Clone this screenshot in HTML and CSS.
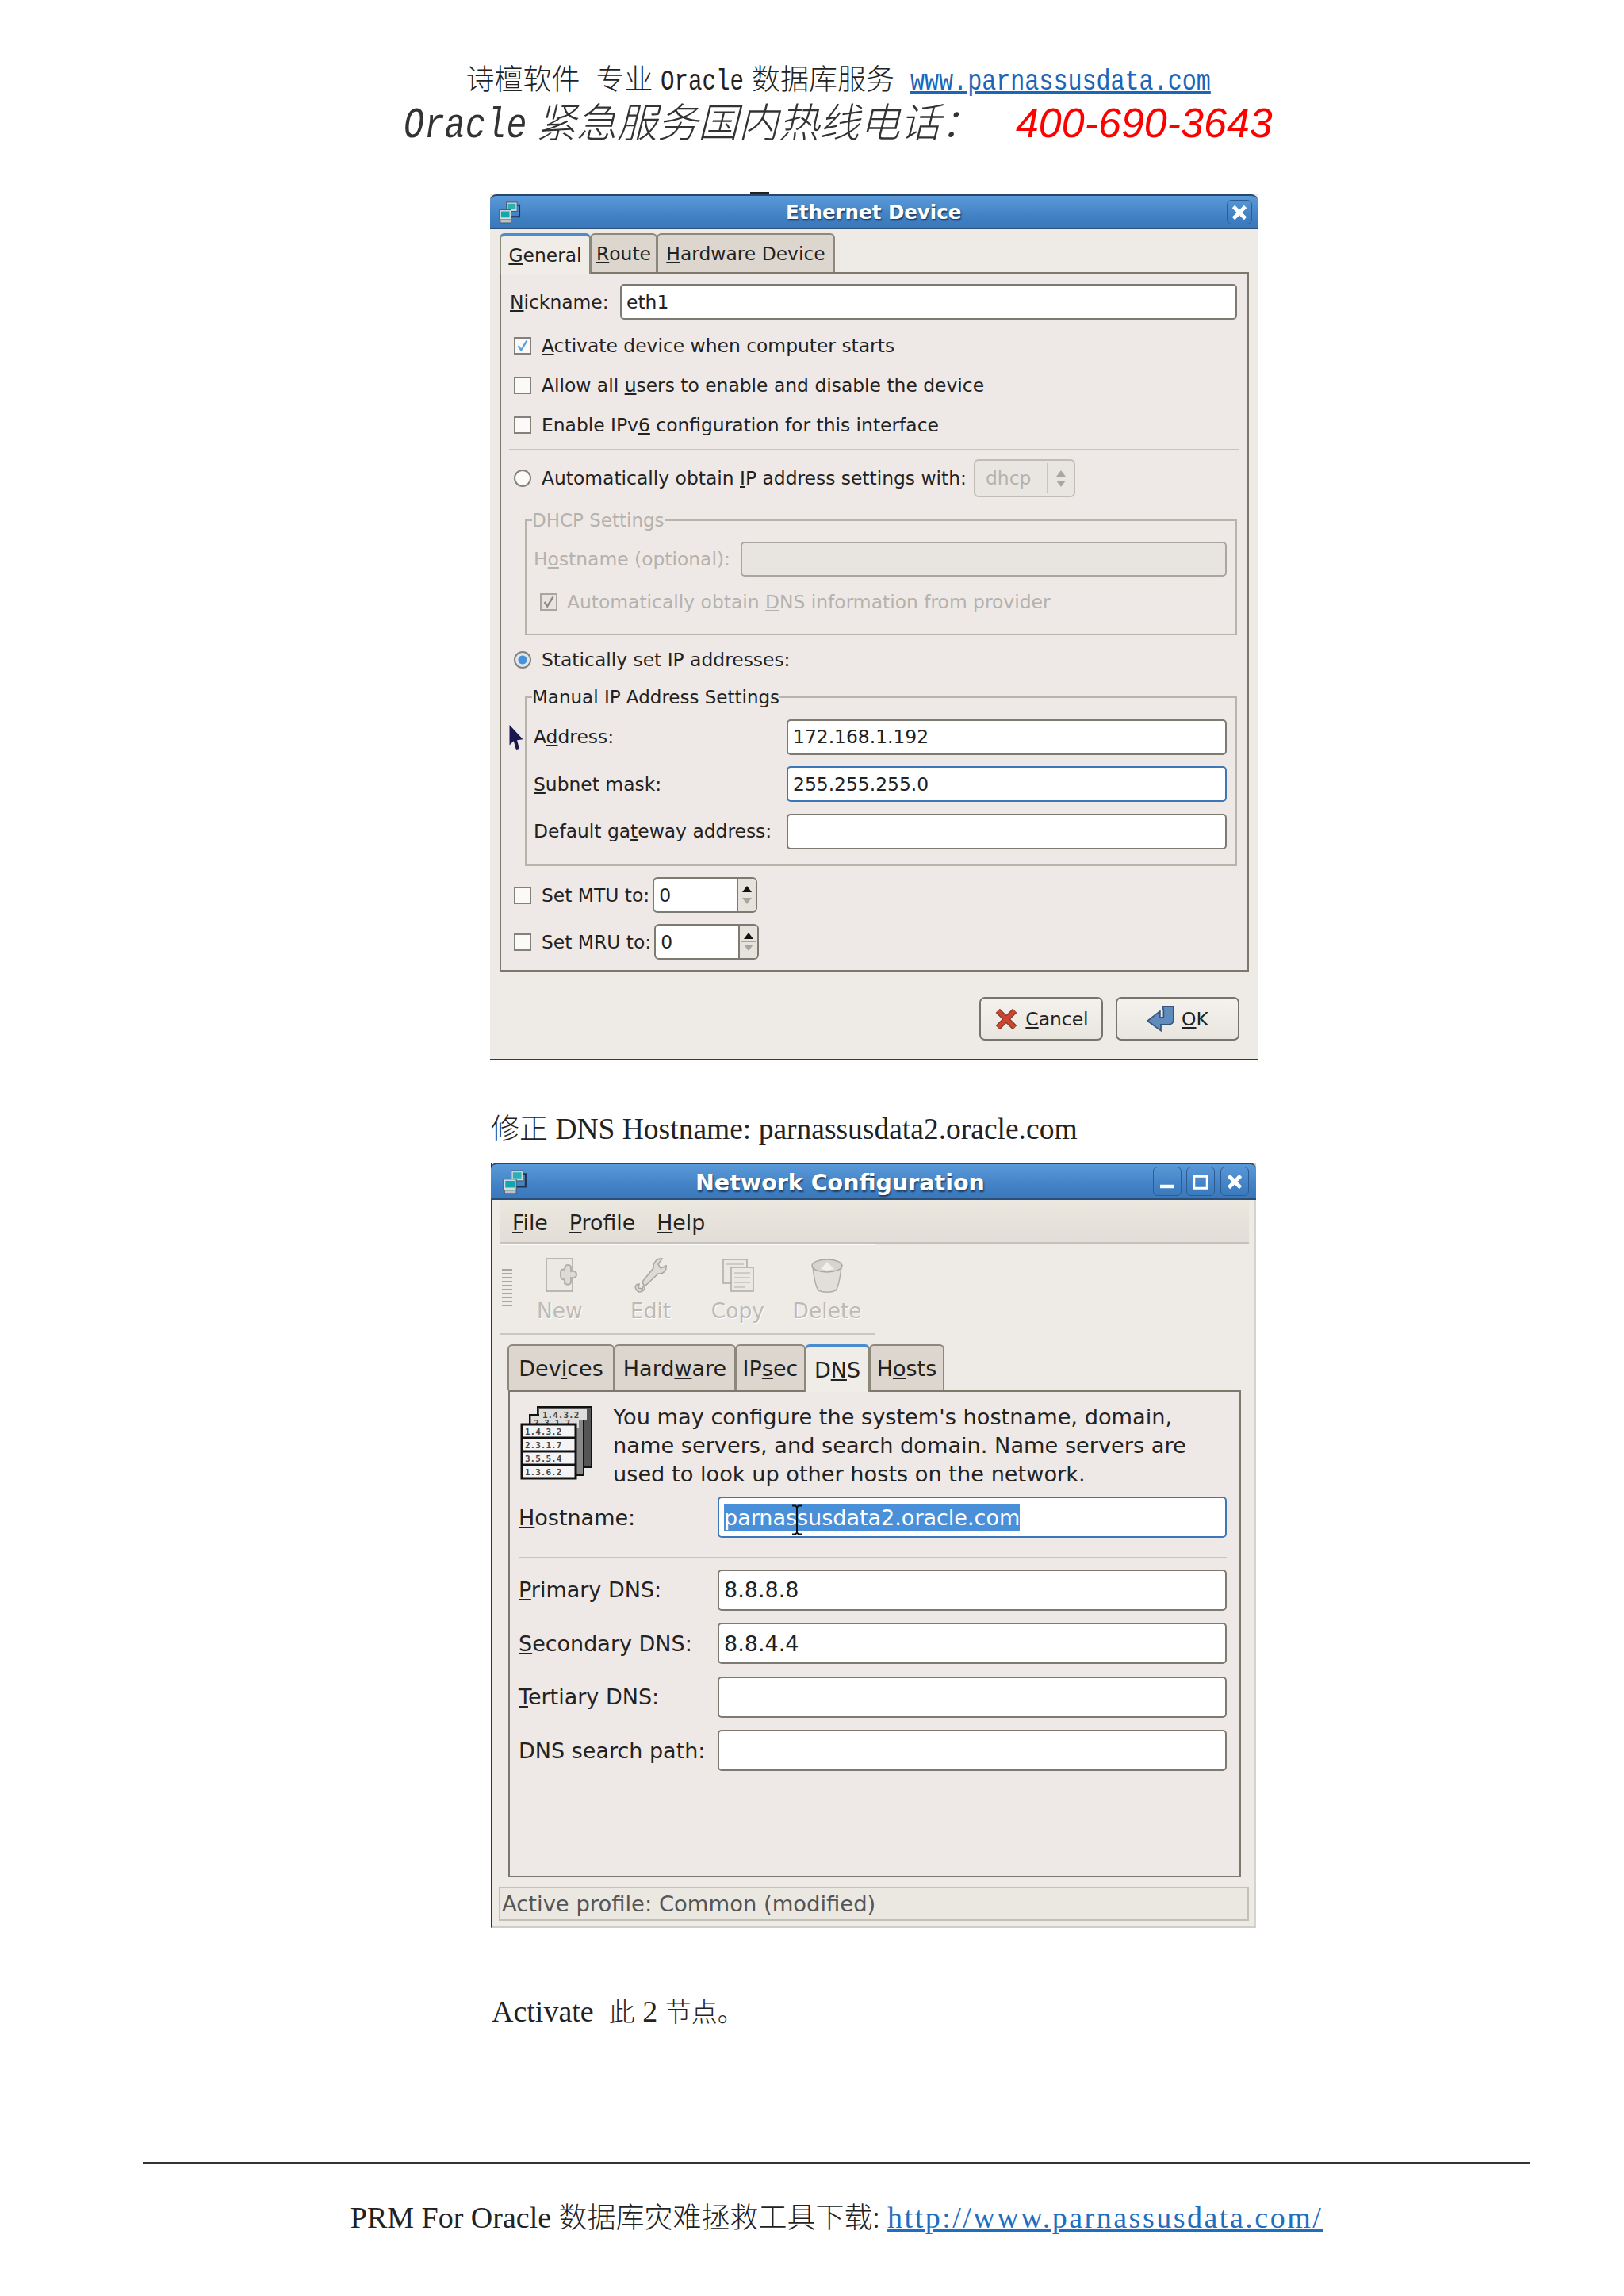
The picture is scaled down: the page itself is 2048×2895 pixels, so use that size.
FILE: index.html
```html
<!DOCTYPE html>
<html lang="zh">
<head>
    <meta charset="UTF-8">
    <title>Oracle DNS Hostname</title>
    <link rel="stylesheet" href="styles.css">
</head>
<body>
    <div class="page-head">
        <p class="head-one">诗檀软件&nbsp;&nbsp;专业 <span class="mono mono-word">Oracle</span> 数据库服务&nbsp;&nbsp;<a class="mono mono-link" href="#">www.parnassusdata.com</a></p>
        <p class="head-two"><span class="mono-big">Oracle</span> 紧急服务国内热线电话：<span class="phone">400-690-3643</span></p>
    </div>

    <div class="dialog eth">
        <span class="top-speck"></span>
        <div class="titlebar">
            <svg class="app-icon" viewBox="0 0 30 30"><use href="#net"/></svg>
            <span class="title eth-title">Ethernet Device</span>
            <span class="wm-btn wm-eth"><svg viewBox="0 0 16 16"><path d="M3 3l10 10M13 3L3 13" stroke="#fff" stroke-width="3.2"/></svg></span>
        </div>
        <div class="tabs eth-tabs">
            <div class="tab active t-general"><u>G</u>eneral</div>
            <div class="tab t-route"><u>R</u>oute</div>
            <div class="tab t-hw"><u>H</u>ardware Device</div>
        </div>
        <div class="panel eth-panel">
            <div class="row nick-row">
                <label class="nick-label"><u>N</u>ickname:</label>
                <div class="entry grow">eth1</div>
            </div>
            <div class="opt first-opt">
                <span class="check"><svg viewBox="0 0 20 20"><path d="M4 10l4 6 8-13" fill="none" stroke="#5a9fe0" stroke-width="2.6"/></svg></span>
                <span><u>A</u>ctivate device when computer starts</span>
            </div>
            <div class="opt">
                <span class="check"></span>
                <span>Allow all <u>u</u>sers to enable and disable the device</span>
            </div>
            <div class="opt">
                <span class="check"></span>
                <span>Enable IPv<u>6</u> configuration for this interface</span>
            </div>
            <div class="sep"></div>
            <div class="opt radio-row">
                <span class="radio"></span>
                <span>Automatically obtain <u>I</u>P address settings with:</span>
                <div class="combo">
                    <span class="combo-text">dhcp</span>
                    <span class="combo-arrows"><i class="tri-up"></i><i class="tri-down"></i></span>
                </div>
            </div>

            <fieldset class="frame dhcp">
                <legend>DHCP Settings</legend>
                <div class="row host-row">
                    <label class="dhcp-label">H<u>o</u>stname (optional):</label>
                    <div class="entry grow off"></div>
                </div>
                <div class="opt dns-opt">
                    <span class="check off"><svg viewBox="0 0 20 20"><path d="M4 10l4 6 8-13" fill="none" stroke="#8f8c86" stroke-width="2.8"/></svg></span>
                    <span>Automatically obtain <u>D</u>NS information from provider</span>
                </div>
            </fieldset>

            <div class="opt static-row">
                <span class="radio on"></span>
                <span>Statically set IP addresses:</span>
            </div>

            <fieldset class="frame manual">
                <legend>Manual IP Address Settings</legend>
                <div class="row ip-row">
                    <label class="ip-label">A<u>d</u>dress:</label>
                    <div class="entry grow">172.168.1.192</div>
                </div>
                <div class="row ip-row">
                    <label class="ip-label"><u>S</u>ubnet mask:</label>
                    <div class="entry grow focus">255.255.255.0</div>
                </div>
                <div class="row ip-row">
                    <label class="ip-label">Default ga<u>t</u>eway address:</label>
                    <div class="entry grow"></div>
                </div>
            </fieldset>

            <div class="opt mtu-row">
                <span class="check"></span>
                <span>Set MTU to:</span>
                <div class="spin">
                    <span class="spin-val">0</span>
                    <span class="spin-btns"><i class="tri-up dark"></i><i class="spin-line"></i><i class="tri-down"></i></span>
                </div>
            </div>
            <div class="opt mru-row">
                <span class="check"></span>
                <span>Set MRU to:</span>
                <div class="spin">
                    <span class="spin-val">0</span>
                    <span class="spin-btns"><i class="tri-up dark"></i><i class="spin-line"></i><i class="tri-down"></i></span>
                </div>
            </div>
        </div>
        <div class="sep eth-sep"></div>
        <div class="actions">
            <div class="push">
                <svg class="btn-icon" viewBox="0 0 30 30"><path d="M5 5l20 20M25 5L5 25" stroke="#7d3a2c" stroke-width="7"/><path d="M5 5l20 20M25 5L5 25" stroke="#cf4630" stroke-width="4.5"/></svg>
                <span><u>C</u>ancel</span>
            </div>
            <div class="push">
                <svg class="btn-icon ok-icon" viewBox="0 0 32 30"><path d="M18 1h12v15c0 3-2 5-5 5h-9v7L1 17l14-11v7h4V5z" fill="#5f8cbc" stroke="#34557c" stroke-width="1.5"/></svg>
                <span><u>O</u>K</span>
            </div>
        </div>
    </div>

    <p class="text caption"><span class="cjk">修正</span> DNS Hostname: parnassusdata2.oracle.com</p>

    <div class="dialog net">
        <div class="titlebar net-bar">
            <svg class="app-icon net-icon" viewBox="0 0 30 30"><use href="#net"/></svg>
            <span class="title net-title">Network Configuration</span>
            <span class="wm-btn wm-min"><svg viewBox="0 0 16 16"><path d="M2 12h12" stroke="#fff" stroke-width="3"/></svg></span>
            <span class="wm-btn wm-max"><svg viewBox="0 0 16 16"><path d="M2.5 3.5h11v10h-11z" fill="none" stroke="#fff" stroke-width="2"/></svg></span>
            <span class="wm-btn wm-cls"><svg viewBox="0 0 16 16"><path d="M3 3l10 10M13 3L3 13" stroke="#fff" stroke-width="3.2"/></svg></span>
        </div>
        <div class="menubar">
            <span class="menu-file"><u>F</u>ile</span>
            <span class="menu-profile"><u>P</u>rofile</span>
            <span><u>H</u>elp</span>
        </div>
        <div class="toolbar">
            <div class="grip"></div>
            <div class="tool t-new">
                <svg class="tool-icon" viewBox="0 0 44 44"><path d="M5 1h33v41H5z" fill="#ece9e4" stroke="#a8a6a1" stroke-width="1.5"/><path d="M23 18c0-3 3-4 5-3l1-5c3-2 7-1 7 2v5c3-1 7 0 7 4s-4 5-7 4v5c0 4-5 5-8 2l0-5c-3 1-5-1-5-4z" fill="#dedbd6" stroke="#b3b0ab" stroke-width="2"/></svg>
                <span>New</span>
            </div>
            <div class="tool t-edit">
                <svg class="tool-icon" viewBox="0 0 44 44"><path d="M36 1l-5 7 3 5 7-3c1 6-4 11-10 10L14 36c1 6-7 9-10 5-3-3-2-8 3-8l-1 5 5 1 2-5c-2-2-2-4-1-5L25 13c-1-7 5-13 11-12z" fill="#dedbd6" stroke="#a9a7a2" stroke-width="1.6"/></svg>
                <span>Edit</span>
            </div>
            <div class="tool t-copy">
                <svg class="tool-icon" viewBox="0 0 44 44"><path d="M4 2h30v30H4z" fill="#ebe8e3" stroke="#aeaba6" stroke-width="1.5"/><path d="M14 12h28v30H14z" fill="#ebe8e3" stroke="#aeaba6" stroke-width="1.5"/><path d="M18 19h20M18 25h20M18 31h20M18 37h14M8 8h22" stroke="#c4c1bc" stroke-width="1.5"/></svg>
                <span>Copy</span>
            </div>
            <div class="tool t-delete">
                <svg class="tool-icon" viewBox="0 0 44 44"><path d="M4 10c2 22 5 28 7 31 6 3 16 3 22 0 2-3 5-9 7-31z" fill="#e2dfda" stroke="#b0ada8" stroke-width="1.5"/><ellipse cx="22" cy="10" rx="19" ry="8" fill="#d7d4cf" stroke="#aaa7a2" stroke-width="1.5"/><path d="M14 14l8-9 9 9-9 2z" fill="#f1efeb"/></svg>
                <span>Delete</span>
            </div>
        </div>
        <div class="tabs net-tabs">
            <div class="tab n-dev">Dev<u>i</u>ces</div>
            <div class="tab n-hw">Hard<u>w</u>are</div>
            <div class="tab n-ip">IP<u>s</u>ec</div>
            <div class="tab active n-dns">D<u>N</u>S</div>
            <div class="tab n-hosts">H<u>o</u>sts</div>
        </div>
        <div class="panel net-panel">
            <div class="intro">
                <svg class="dns-icon" viewBox="0 0 92 96">
                    <rect x="22" y="4" width="68" height="76" fill="#555" stroke="#111" stroke-width="2"/>
                    <rect x="12" y="14" width="68" height="76" fill="#888" stroke="#111" stroke-width="2"/>
                    <rect x="24" y="6" width="60" height="15" fill="#ddd"/>
                    <rect x="14" y="16" width="60" height="15" fill="#ddd"/>
                    <text class="dns-num" x="28" y="18">1.4.3.2</text>
                    <text class="dns-num" x="17" y="28">2.3.1.7</text>
                    <rect x="2" y="26" width="68" height="68" fill="#f4f3f6" stroke="#111" stroke-width="3"/>
                    <path d="M2 43h68M2 60h68M2 77h68" stroke="#111" stroke-width="3"/>
                    <text class="dns-num" x="6" y="39">1.4.3.2</text>
                    <text class="dns-num" x="6" y="56">2.3.1.7</text>
                    <text class="dns-num" x="6" y="73">3.5.5.4</text>
                    <text class="dns-num" x="6" y="90">1.3.6.2</text>
                </svg>
                <p class="intro-text">You may configure the system's hostname, domain,<br>name servers, and search domain. Name servers are<br>used to look up other hosts on the network.</p>
            </div>
            <div class="row dns-row host-dns">
                <label class="dns-label"><u>H</u>ostname:</label>
                <div class="entry grow focus sel-entry"><span class="sel">parnassusdata2.oracle.com</span></div>
            </div>
            <div class="sep net-sep"></div>
            <div class="row dns-row">
                <label class="dns-label"><u>P</u>rimary DNS:</label>
                <div class="entry grow">8.8.8.8</div>
            </div>
            <div class="row dns-row">
                <label class="dns-label"><u>S</u>econdary DNS:</label>
                <div class="entry grow">8.8.4.4</div>
            </div>
            <div class="row dns-row">
                <label class="dns-label"><u>T</u>ertiary DNS:</label>
                <div class="entry grow"></div>
            </div>
            <div class="row dns-row">
                <label class="dns-label">DNS search path:</label>
                <div class="entry grow"></div>
            </div>
        </div>
        <div class="statusbar">Active profile: Common (modified)</div>
    </div>

    <p class="text activate">Activate&nbsp;&nbsp;<span class="cjk">此</span> 2 <span class="cjk">节点。</span></p>

    <div class="foot">
        <p class="text foot-text">PRM For Oracle <span class="cjk">数据库灾难拯救工具下载:</span> <a href="#">http://www.parnassusdata.com/</a></p>
    </div>

    <!-- cursors sit on top of the screenshots -->
    <svg class="cursor-arrow" viewBox="0 0 18 32"><path d="M1 1l16 17-7 1 3 11-4 1-3-11-5 5z" fill="#1b1750"/></svg>
    <svg class="cursor-beam" viewBox="0 0 16 38"><path d="M2 1h4l2 2 2-2h4M2 37h4l2-2 2 2h4M8 3v32" fill="none" stroke="#111" stroke-width="2"/></svg>

    <svg class="defs" width="0" height="0">
        <symbol id="net" viewBox="0 0 30 30">
            <path d="M20 6h8v15h-14" fill="none" stroke="#1f3350" stroke-width="2"/>
            <rect x="11" y="2" width="14" height="12" fill="#c9d3da" stroke="#44566a"/>
            <rect x="13" y="4" width="10" height="7" fill="#2bb0b5"/>
            <rect x="2" y="12" width="15" height="13" fill="#d5dde2" stroke="#44566a"/>
            <rect x="4" y="14" width="11" height="8" fill="#12a6ad"/>
            <rect x="3" y="25" width="14" height="4" fill="#b8c2c9" stroke="#44566a"/>
        </symbol>
    </svg>
</body>
</html>
```

FILE: styles.css
```css
* { box-sizing: border-box; }
html, body { margin: 0; padding: 0; }
body { background: #fff; width: 2048px; height: 2895px; position: relative; overflow: hidden; font-family: "DejaVu Sans", sans-serif; color: #222; }
p { margin: 0; }
u { text-underline-offset: 2px; }
a { color: #1a66b8; }
.defs { position: absolute; }

.page-head { height: 245px; padding: 72px 0 0 66px; text-align: center; }
.head-one { font-family: "Noto Sans CJK SC", sans-serif; font-size: 36px; line-height: 50px; color: #222; font-weight: 300; word-spacing: 2px; }
/* condensed mono: scaled glyphs, margin takes the spare width back */
.mono { font-family: "Liberation Mono", monospace; display: inline-block; transform-origin: left center; }
.mono-word { transform: scaleX(.81); margin-right: -25px; }
.mono-link { color: #1a66b8; transform: scaleX(.835); margin-right: -75px; }
.head-two { font-family: "Noto Sans CJK SC", sans-serif; font-size: 51px; line-height: 66px; margin-top: -11px; font-style: italic; color: #333; font-weight: 300; }
.mono-big { font-family: "Liberation Mono", monospace; font-size: 54px; display: inline-block; transform: scaleX(.8); transform-origin: left center; margin-right: -39px; }
.phone { font-family: "Liberation Sans", sans-serif; font-size: 52px; color: #f00; margin-left: 44px; }

.dialog { position: relative; background: #eeeae6; }
.eth { margin-left: 618px; width: 969px; height: 1092px; border-bottom: 2px solid #3a3a36; border-right: 1px solid #d0ccc4; }
.net { margin-left: 619px; width: 965px; height: 965px; border-left: 2px solid #33332f; border-right: 2px solid #d6d3cc; border-bottom: 2px solid #d0cdc6; }
.top-speck { position: absolute; left: 328px; top: -3px; width: 24px; height: 3px; background: #222; }

.titlebar { height: 44px; background: linear-gradient(#5b9ad9, #3f7fc2 70%, #3a78ba); border-top: 2px solid #27476b; border-bottom: 2px solid #2a4f78; border-radius: 8px 8px 0 0; display: flex; align-items: center; position: relative; }
.net-bar { height: 47px; margin-left: -2px; margin-right: -2px; }
.app-icon { width: 29px; height: 29px; margin-left: 10px; }
.net-icon { width: 34px; height: 32px; margin-left: 13px; }
.title { position: absolute; color: #fff; font-weight: bold; text-shadow: 1px 2px 2px #1e3c60; }
.eth-title { left: 373px; font-size: 24.5px; }
.net-title { left: 258px; font-size: 28.5px; margin-top: 3px; }
.wm-btn { position: absolute; border: 1px solid #2d5c92; border-radius: 6px; display: flex; align-items: center; justify-content: center; }
.wm-btn svg { width: 24px; height: 24px; }
.wm-eth { left: 929px; top: 5px; width: 32px; height: 31px; }
.wm-min, .wm-max, .wm-cls { top: 3px; width: 36px; height: 37px; }
.wm-min { left: 835px; }
.wm-max { left: 877px; }
.wm-cls { left: 920px; }

.tabs { display: flex; position: relative; z-index: 1; }
.eth-tabs { height: 51px; margin: 5px 0 -2px 12px; font-size: 23.4px; }
.net-tabs { height: 60px; margin: 12px 0 -2px 19px; font-size: 27px; }
.tab { background: #dcd6ce; border: 2px solid #8d887c; border-bottom: 0; border-radius: 6px 6px 0 0; margin-bottom: 2px; display: flex; align-items: center; justify-content: center; margin-right: -1px; }
.tab.active { background: #f0ede9; border-color: #8d887c; border-top: 4px solid #4a8ccf; margin-bottom: 0; }
.t-general { width: 115px; }
.t-route { width: 85px; }
.t-hw { width: 225px; }
.n-dev { width: 135px; }
.n-hw { width: 154px; }
.n-ip { width: 89px; }
.n-dns { width: 82px; }
.n-hosts { width: 95px; }

.panel { border: 2px solid #7c786c; background: #eee9e6; }
.eth-panel { width: 945px; margin-left: 12px; height: 882px; padding: 13px 10px 13px 10px; font-size: 23.4px; }
.net-panel { width: 924px; margin-left: 20px; height: 614px; padding: 12px 16px 0 11px; font-size: 27px; }

.row { display: flex; align-items: center; }
.nick-row { height: 45px; margin-right: 3px; }
.nick-label { width: 140px; padding-left: 1px; }
.grow { flex: 1; }
.entry { height: 100%; background: #fff; border: 2px solid #7d7a72; border-radius: 5px; display: flex; align-items: center; padding-left: 6px; color: #222; }
.entry.off { background: #e8e4df; border-color: #aaa69f; }
.entry.focus { border-color: #3c78b8; }

.opt { display: flex; align-items: center; height: 50px; padding-left: 6px; }
.first-opt { margin-top: 8px; }
.check { width: 22px; height: 22px; border: 2px solid #84817a; background: #fbfaf8; margin-right: 13px; flex: none; display: flex; }
.check svg { width: 100%; height: 100%; }
.check.off { background: #e8e4df; border-color: #aaa69f; margin-right: 12px; }
.radio { width: 22px; height: 22px; border: 2px solid #84817a; border-radius: 50%; background: #fbfaf8; margin-right: 13px; flex: none; }
.radio.on { background: radial-gradient(circle, #4a90dc 0 5px, #dfe7ef 6px); }

.sep { height: 2px; background: #c8c4bc; }
.eth-panel > .sep { margin: 5px 0 0 0; }
.radio-row { height: 48px; margin-top: 11px; }
.combo { margin-left: 9px; width: 128px; height: 48px; border: 2px solid #c0bdb6; border-radius: 6px; background: #e9e6e1; display: flex; align-items: center; color: #b5b2ad; }
.combo-text { padding-left: 13px; width: 90px; }
.combo-arrows { border-left: 2px solid #c8c5be; height: 38px; flex: 1; display: flex; flex-direction: column; align-items: center; justify-content: center; gap: 5px; }
.tri-up { width: 0; height: 0; border-left: 6px solid transparent; border-right: 6px solid transparent; border-bottom: 8px solid #aaa69f; display: block; }
.tri-down { width: 0; height: 0; border-left: 6px solid transparent; border-right: 6px solid transparent; border-top: 8px solid #aaa69f; display: block; }
.tri-up.dark { border-bottom-color: #111; }

.frame { margin: 0 0 0 20px; width: 898px; border: 2px solid #b8b4ab; padding: 0 11px 0 9px; min-width: 0; }
.frame legend { padding: 0; margin-left: -2px; line-height: 26px; font-size: 23px; }
.dhcp { margin-top: 16px; padding-bottom: 20px; color: #b5b2ad; }
.host-row { height: 44px; margin-top: 14px; }
.dhcp-label { width: 261px; }
.dns-opt { height: 40px; margin-top: 12px; padding-left: 8px; }
.static-row { height: 40px; margin-top: 11px; }
.manual { margin-top: 14px; padding-bottom: 19px; }
.ip-row { height: 45px; margin-top: 14.5px; }
.ip-label { width: 319px; }

.mtu-row { height: 45px; margin-top: 14.5px; }
.mru-row { height: 45px; margin-top: 14px; }
.spin { margin-left: 4px; width: 132px; height: 45px; border: 2px solid #7d7a72; border-radius: 6px; background: #fff; display: flex; align-items: center; }
.spin-val { width: 104px; padding-left: 6px; }
.spin-btns { flex: 1; height: 100%; background: #e6e2dc; border-left: 2px solid #7d7a72; display: flex; flex-direction: column; align-items: center; justify-content: center; gap: 3px; border-radius: 0 4px 4px 0; }
.spin-line { width: 18px; height: 1px; background: #a8a49c; }

.eth-sep { margin: 9px 11px 0 12px; height: 1px; }
.actions { display: flex; justify-content: flex-end; gap: 16px; padding: 22px 23px 0 0; font-size: 23.4px; }
.push { width: 156px; height: 55px; border: 2px solid #77746c; border-radius: 7px; background: linear-gradient(#f5f2ee, #e9e5df); display: flex; align-items: center; justify-content: center; gap: 8px; }
.btn-icon { width: 32px; height: 32px; }
.ok-icon { width: 36px; height: 34px; }

.menubar { height: 55px; margin-left: 9px; margin-right: 7px; background: linear-gradient(#ebe8e0, #e2ddd6); border-bottom: 2px solid #c6c2ba; display: flex; align-items: center; padding: 3px 0 0 16px; font-size: 26.8px; }
.menu-file { margin-right: 27px; }
.menu-profile { margin-right: 27px; }
.toolbar { width: 473px; height: 115px; margin-left: 9px; border-top: 2px solid #fbfaf8; border-bottom: 2px solid #cbc7bf; display: flex; padding-top: 16px; color: #bdbab5; font-size: 26.5px; }
.grip { width: 13px; height: 49px; margin: 14px 2px 0 3px; background: repeating-linear-gradient(#a9a7a2 0 2px, #eeeae6 2px 5px); }
.tool { display: flex; flex-direction: column; align-items: center; }
.tool-icon { width: 44px; height: 44px; }
.tool span { line-height: 30px; margin-top: 8px; text-shadow: 1px 1px 0 #fff; }
.t-new { width: 116px; }
.t-edit { width: 114px; }
.t-copy { width: 106px; }
.t-delete { width: 120px; }

.intro { display: flex; height: 108px; }
.dns-icon { width: 92px; height: 96px; margin: 3px 25px 0 2px; flex: none; }
.dns-num { font-family: "DejaVu Sans Mono", monospace; font-size: 11px; fill: #444; font-weight: bold; }
.intro-text { line-height: 36px; font-size: 27.2px; white-space: nowrap; padding-top: 2px; }
.dns-row { height: 52px; margin-top: 15.5px; }
.host-dns { margin-top: 12px; }
.dns-label { width: 251px; }
.sel-entry { padding-left: 6px; }
.sel { background: #4a90d9; color: #fff; height: 34px; display: flex; align-items: center; }
.net-sep { margin-top: 24px; height: 1px; margin-bottom: -1px; }
.statusbar { margin: 12px 7px 0 8px; height: 43px; border: 2px solid #c3c0b8; background: #ebe8e2; display: flex; align-items: center; padding-left: 2px; color: #555; font-size: 27.4px; }

.text { font-family: "Liberation Serif", "Noto Sans CJK SC", serif; font-size: 38px; color: #222; }
.cjk { font-family: "Noto Sans CJK SC", sans-serif; font-weight: 300; font-size: 36px; }
.caption { font-size: 37.5px; margin: 58px 0 17px 619px; line-height: 50px; }
.activate { margin: 79px 0 0 620px; line-height: 50px; }
.activate .cjk { font-size: 33px; }
.foot { margin: 165px 0 0 180px; width: 1750px; border-top: 2px solid #333; padding-top: 40px; text-align: center; }
.foot-text { line-height: 50px; }
.foot-text a { color: #1f6fc0; letter-spacing: 2.5px; }

.cursor-arrow { position: absolute; left: 641px; top: 913px; width: 20px; height: 34px; }
.cursor-beam { position: absolute; left: 997px; top: 1897px; width: 16px; height: 39px; }
```
